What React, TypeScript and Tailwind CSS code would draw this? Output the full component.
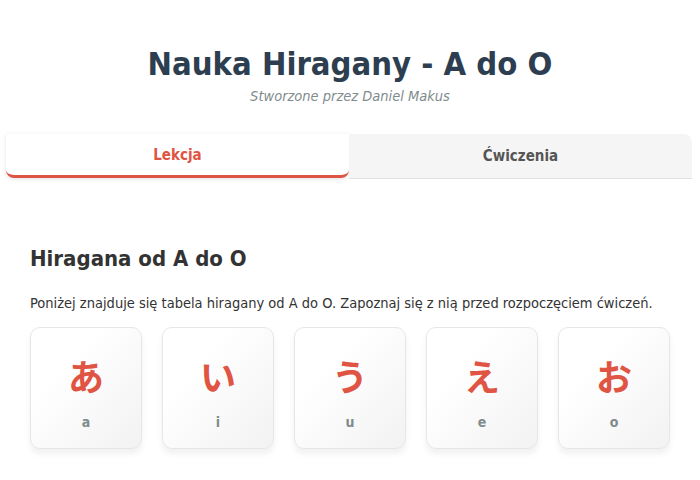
const kana = [
  { char: 'あ', romaji: 'a' },
  { char: 'い', romaji: 'i' },
  { char: 'う', romaji: 'u' },
  { char: 'え', romaji: 'e' },
  { char: 'お', romaji: 'o' },
];

function KanaCard({ char, romaji }: { char: string; romaji: string }) {
  return (
    <div className="flex h-[122px] w-[112px] flex-col items-center rounded-[10px] border border-[#e6e6e6] bg-gradient-to-br from-white from-30% to-[#f2f2f2] shadow-[0_5px_6px_rgba(0,0,0,0.06)]">
      <span className="mt-[22px] text-[36px] font-bold leading-[50px] text-[#e05444] [font-family:'Noto_Sans_CJK_JP',sans-serif]">
        {char}
      </span>
      <span className="mt-[12px] text-[14px] font-bold text-[#7f8c8d]">{romaji}</span>
    </div>
  );
}

export default function App() {
  return (
    <div className="min-h-[480px] bg-white text-[#333] font-stretch-condensed [font-family:'DejaVu_Sans_Condensed','DejaVu_Sans',sans-serif]">
      <header className="pt-[44px] text-center">
        <h1 className="text-[32.5px] font-bold leading-[40px] text-[#2c3e50]">Nauka Hiragany - A do O</h1>
        <p className="mt-[2px] text-[14.5px] italic text-[#7f8c8d]">Stworzone przez Daniel Makus</p>
      </header>

      <div className="ml-[6px] mt-[26px] flex w-[686px]">
        <button
          type="button"
          className="h-[44px] flex-1 rounded-b-[8px] border-b-[3px] border-[#e05444] bg-white pt-[2px] text-[15px] font-bold text-[#e05444] shadow-[0_1px_4px_rgba(0,0,0,0.12)]"
        >
          Lekcja
        </button>
        <button
          type="button"
          className="h-[45px] flex-1 rounded-tr-[8px] border-b border-[#e2e2e2] bg-[#f5f5f5] text-[15px] font-bold text-[#555]"
        >
          Ćwiczenia
        </button>
      </div>

      <section className="px-[30px] pt-[66px]">
        <h2 className="text-[22px] font-bold leading-[28px] text-[#333]">Hiragana od A do O</h2>
        <p className="mt-[20px] text-[14.5px] leading-[20px]">
          Poniżej znajduje się tabela hiragany od A do O. Zapoznaj się z nią przed rozpoczęciem ćwiczeń.
        </p>
        <div className="mt-[14px] flex gap-[20px]">
          {kana.map((k) => (
            <KanaCard key={k.romaji} {...k} />
          ))}
        </div>
      </section>
    </div>
  );
}
